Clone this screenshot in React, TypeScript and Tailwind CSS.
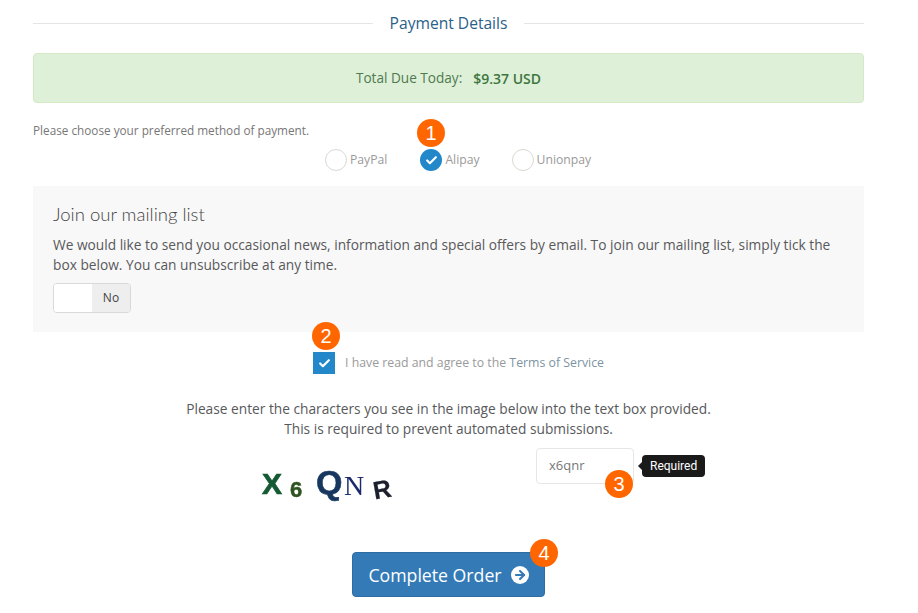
import React from 'react';
import { Check, ArrowRight } from 'lucide-react';

function Badge({ n, className }: { n: string; className: string }) {
  return (
    <div className={`absolute w-[28px] h-[28px] rounded-full bg-[#ff6600] text-white flex items-center justify-center text-[20px] font-medium font-['Liberation_Sans',sans-serif] ${className}`}>
      {n}
    </div>
  );
}

function Radio({ label, checked, className }: { label: string; checked?: boolean; className?: string }) {
  return (
    <div className={`flex items-center gap-[3px] ${className ?? ''}`}>
      {checked ? (
        <div className="w-[22px] h-[22px] rounded-full bg-[#2388c9] flex items-center justify-center">
          <Check size={13} strokeWidth={4} className="text-white" />
        </div>
      ) : (
        <div className="w-[22px] h-[22px] rounded-full bg-white border border-[#dcd8d2]" />
      )}
      <span className="text-[12.2px] text-[#9a9a9a]">{label}</span>
    </div>
  );
}

export default function App() {
  return (
    <div className="w-[918px] h-[613px] overflow-hidden bg-white pl-[33px] pr-[54px] pt-[12px] font-['Open_Sans',sans-serif] text-[#58595b]">
      {/* Section title */}
      <div className="flex items-center h-[22px] gap-[17px]">
        <div className="flex-1 h-px bg-[#e5e5e5]" />
        <h2 className="text-[15.6px] leading-[22px] text-[#2a6189]">Payment Details</h2>
        <div className="flex-1 h-px bg-[#e5e5e5]" />
      </div>

      {/* Total */}
      <div className="mt-[19px] h-[50px] rounded-[4px] bg-[#dff0d8] border border-[#d6e9c6] flex items-center justify-center text-[13.6px] text-[#4e7a4f]">
        <span>Total Due Today:</span>
        <strong className="ml-[11px] text-[14px] font-semibold text-[#3c763d]">$9.37 USD</strong>
      </div>

      {/* Payment method */}
      <p className="mt-[19px] text-[11.75px] leading-[17px] text-[#777]">Please choose your preferred method of payment.</p>
      <div className="relative mt-[10px] h-[22px] flex pl-[292px]">
        <Radio label="PayPal" />
        <Radio label="Alipay" checked className="ml-[33px]" />
        <Radio label="Unionpay" className="ml-[32px]" />
        <Badge n="1" className="left-[384px] -top-[30px]" />
      </div>

      {/* Mailing list */}
      <div className="mt-[15px] h-[146px] bg-[#f8f8f8] px-[20px] pt-[16px]">
        <h3 className="font-['Lato',sans-serif] font-light text-[18.5px] leading-[24px] text-[#444]">Join our mailing list</h3>
        <p className="mt-[9px] text-[13.73px] leading-[20px] text-[#58595b]">
          We would like to send you occasional news, information and special offers by email. To join our mailing list, simply tick the box below. You can unsubscribe at any time.
        </p>
        <div className="mt-[8px] w-[78px] h-[30px] rounded-[4px] border border-[#d9d9d9] overflow-hidden flex">
          <div className="w-[38px] bg-white" />
          <div className="flex-1 bg-[#eeeeee] flex items-center justify-center text-[12px] text-[#444]">No</div>
        </div>
      </div>

      {/* Terms */}
      <div className="relative mt-[20px] h-[22px] flex items-center pl-[280px]">
        <div className="w-[22px] h-[22px] bg-[#2388c9] flex items-center justify-center">
          <Check size={13} strokeWidth={4} className="text-white" />
        </div>
        <span className="ml-[10px] text-[12.3px] text-[#9a9a9a]">
          I have read and agree to the <span className="text-[#7d93a3]">Terms of Service</span>
        </span>
        <Badge n="2" className="left-[279px] -top-[30px]" />
      </div>

      {/* Captcha */}
      <p className="mt-[25px] text-center text-[13.73px] leading-[20px] text-[#58595b]">
        Please enter the characters you see in the image below into the text box provided.
        <br />
        This is required to prevent automated submissions.
      </p>
      <div className="relative mt-[9px] h-[52px] flex">
        <div className="ml-[229px] w-[140px] h-[52px] relative font-['Liberation_Sans',sans-serif] font-bold select-none blur-[0.4px]">
          <span className="absolute left-[0px] top-[18px] text-[30px] leading-[36px] text-[#145a32] [-webkit-text-stroke:0.7px_#145a32]">X</span>
          <span className="absolute left-[28px] top-[29px] text-[22px] leading-[26px] text-[#2f5320] [-webkit-text-stroke:0.5px_#2f5320]">6</span>
          <span className="absolute left-[54px] top-[14px] text-[34px] leading-[40px] text-[#17375e] [-webkit-text-stroke:0.6px_#17375e]">Q</span>
          <span className="absolute left-[82px] top-[22px] text-[28px] leading-[32px] font-['Liberation_Serif',serif] font-normal text-[#1a2a6c]">N</span>
          <span className="absolute left-[111px] top-[25px] text-[25px] leading-[32px] -rotate-[10deg] text-[#1c1f2e] [-webkit-text-stroke:0.2px_#1c1f2e]">R</span>
        </div>
        <div className="ml-[134px] w-[98px] h-[36px] rounded-[4px] border border-[#e6e6e6] flex items-center pl-[12px] text-[13px] text-[#777]">
          x6qnr
        </div>
        <div className="relative ml-[8px] mt-[7px] h-[22px] px-[8px] rounded-[4px] bg-[#1a1a1a] text-white text-[12px] font-['Roboto',sans-serif] flex items-center">
          <div className="absolute -left-[4px] top-[7px] w-0 h-0 border-y-[4px] border-y-transparent border-r-[4px] border-r-[#1a1a1a]" />
          Required
        </div>
        <Badge n="3" className="left-[572px] top-[22px]" />
      </div>

      {/* Submit */}
      <div className="relative mt-[52px] flex justify-center">
        <button className="w-[193px] h-[45px] pt-[1px] rounded-[4px] bg-[#337ab7] border border-[#2e6da4] text-white text-[17.7px] flex items-center justify-center gap-[9px]">
          Complete Order
          <span className="w-[18px] h-[18px] rounded-full bg-white flex items-center justify-center">
            <ArrowRight size={14} strokeWidth={3.5} className="text-[#337ab7]" />
          </span>
        </button>
        <Badge n="4" className="left-[497px] -top-[13px]" />
      </div>
    </div>
  );
}
